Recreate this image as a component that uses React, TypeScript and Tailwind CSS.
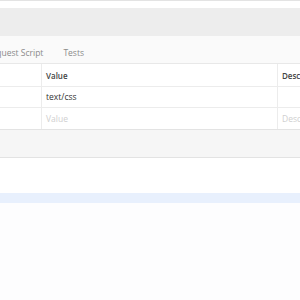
export default function App() {
  return (
    <div className="w-[300px] h-[300px] overflow-hidden bg-white font-['Open_Sans',sans-serif] text-[8.5px] text-[#333]">
      <div className="h-[8px] border-t border-[#e3e3e3]" />
      <div className="h-[28px] bg-[#ededed]" />
      <div className="h-[28px] bg-[#fafafa] border-b border-[#e8e8e8] flex items-end pb-[3px] whitespace-nowrap text-[#8a8a8a] text-[8.5px]">
        <span className="ml-[-28px]">Pre-request Script</span>
        <span className="ml-[20px]">Tests</span>
      </div>
      <div className="flex h-[23px] border-b border-[#ececec] text-[8px] font-semibold text-[#444]">
        <div className="w-[42px] shrink-0 border-r border-[#ececec]" />
        <div className="w-[236px] shrink-0 border-r border-[#ececec] flex items-center pl-[4px] pt-[2px]">Value</div>
        <div className="flex-1 flex items-center pl-[4px] pt-[2px] whitespace-nowrap overflow-hidden">Descr</div>
      </div>
      <div className="flex h-[21px] border-b border-[#ececec]">
        <div className="w-[42px] shrink-0 border-r border-[#ececec]" />
        <div className="w-[236px] shrink-0 border-r border-[#ececec] flex items-center pl-[4px]">text/css</div>
        <div className="flex-1" />
      </div>
      <div className="flex h-[21px]">
        <div className="w-[42px] shrink-0 border-r border-[#ececec]" />
        <div className="w-[236px] shrink-0 border-r border-[#ececec] flex items-center pl-[4px] pt-[2px] text-[#cfcfcf]">Value</div>
        <div className="flex-1 flex items-center pl-[4px] pt-[2px] text-[#cfcfcf] whitespace-nowrap overflow-hidden">Descr</div>
      </div>
      <div className="h-[29px] bg-[#f6f6f6] border-t border-b border-[#e3e3e3]" />
      <div className="h-[35px]" />
      <div className="h-[10px] bg-[#e8f0fd]" />
      <div className="h-[98px] bg-[#fdfdfe]" />
    </div>
  );
}
